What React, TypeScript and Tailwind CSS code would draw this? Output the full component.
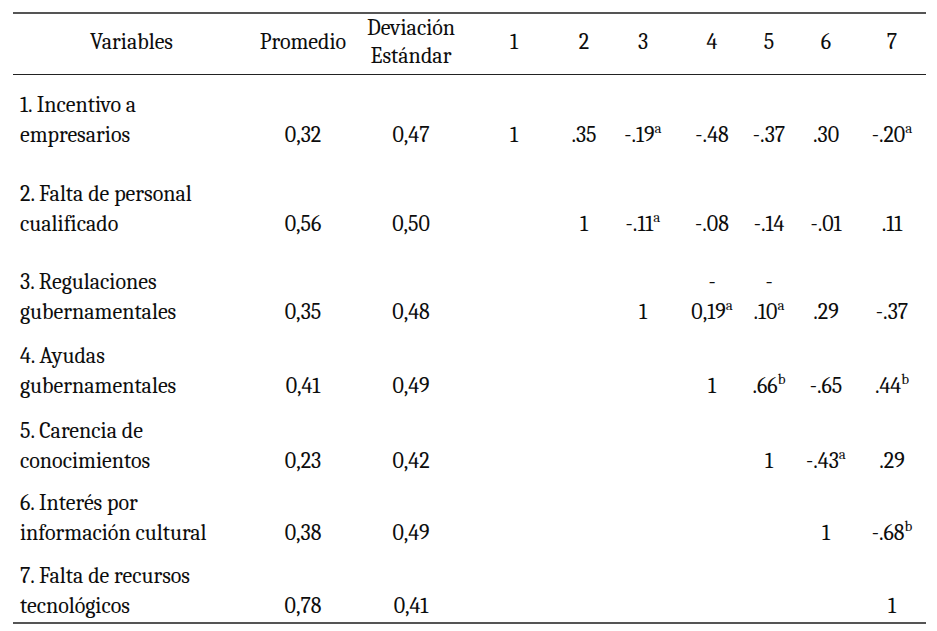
type Cell = { v: string; sup?: string; dash?: boolean };

const rows: { label: [string, string]; mean: string; sd: string; pad: string; cells: Cell[] }[] = [
  {
    label: ['1. Incentivo a', 'empresarios'],
    mean: '0,32',
    sd: '0,47',
    pad: 'pt-[15px]',
    cells: [{ v: '1' }, { v: '.35' }, { v: '-.19', sup: 'a' }, { v: '-.48' }, { v: '-.37' }, { v: '.30' }, { v: '-.20', sup: 'a' }],
  },
  {
    label: ['2. Falta de personal', 'cualificado'],
    mean: '0,56',
    sd: '0,50',
    pad: 'pt-[29px]',
    cells: [{ v: '' }, { v: '1' }, { v: '-.11', sup: 'a' }, { v: '-.08' }, { v: '-.14' }, { v: '-.01' }, { v: '.11' }],
  },
  {
    label: ['3. Regulaciones', 'gubernamentales'],
    mean: '0,35',
    sd: '0,48',
    pad: 'pt-[28px]',
    cells: [{ v: '' }, { v: '' }, { v: '1' }, { v: '0,19', sup: 'a', dash: true }, { v: '.10', sup: 'a', dash: true }, { v: '.29' }, { v: '-.37' }],
  },
  {
    label: ['4. Ayudas', 'gubernamentales'],
    mean: '0,41',
    sd: '0,49',
    pad: 'pt-[14px]',
    cells: [{ v: '' }, { v: '' }, { v: '' }, { v: '1' }, { v: '.66', sup: 'b' }, { v: '-.65' }, { v: '.44', sup: 'b' }],
  },
  {
    label: ['5. Carencia de', 'conocimientos'],
    mean: '0,23',
    sd: '0,42',
    pad: 'pt-[15px]',
    cells: [{ v: '' }, { v: '' }, { v: '' }, { v: '' }, { v: '1' }, { v: '-.43', sup: 'a' }, { v: '.29' }],
  },
  {
    label: ['6. Interés por', 'información cultural'],
    mean: '0,38',
    sd: '0,49',
    pad: 'pt-[12px]',
    cells: [{ v: '' }, { v: '' }, { v: '' }, { v: '' }, { v: '' }, { v: '1' }, { v: '-.68', sup: 'b' }],
  },
  {
    label: ['7. Falta de recursos', 'tecnológicos'],
    mean: '0,78',
    sd: '0,41',
    pad: 'pt-[13px] pb-[1px]',
    cells: [{ v: '' }, { v: '' }, { v: '' }, { v: '' }, { v: '' }, { v: '' }, { v: '1' }],
  },
];

const widths = [237, 106, 110, 96, 44, 74, 64, 50, 64, 68];

export default function App() {
  return (
    <div className="w-[937px] h-[631px] bg-white pl-[13px] pt-[12px] text-[#0d0d0d] text-[22px] font-serif">
      <table className="table-fixed border-collapse w-[913px]">
        <colgroup>
          {widths.map((w, i) => (
            <col key={i} style={{ width: w }} />
          ))}
        </colgroup>
        <thead>
          <tr className="border-t-2 border-t-[#555] border-b border-b-[#222] leading-[28px]">
            <th className="font-normal text-center align-middle pb-[4px]">Variables</th>
            <th className="font-normal text-center align-middle pb-[4px]">Promedio</th>
            <th className="font-normal text-center align-middle pb-[4px]">
              Deviación
              <br />
              Estándar
            </th>
            {[1, 2, 3, 4, 5, 6, 7].map((n) => (
              <th key={n} className="font-normal text-center align-middle pb-[4px]">
                {n}
              </th>
            ))}
          </tr>
        </thead>
        <tbody className="leading-[30px]">
          {rows.map((r, i) => (
            <tr key={i} className={i === rows.length - 1 ? 'border-b-2 border-b-[#555]' : ''}>
              <td className={`text-left pl-[7px] align-bottom whitespace-nowrap ${r.pad}`}>
                {r.label[0]}
                <br />
                {r.label[1]}
              </td>
              <td className={`text-center align-bottom ${r.pad}`}>{r.mean}</td>
              <td className={`text-center align-bottom ${r.pad}`}>{r.sd}</td>
              {r.cells.map((c, j) => (
                <td key={j} className={`text-center align-bottom whitespace-nowrap ${r.pad}`}>
                  {c.dash && (
                    <>
                      -
                      <br />
                    </>
                  )}
                  {c.v}
                  {c.sup && <sup className="text-[15px] -top-[0.6em]">{c.sup}</sup>}
                </td>
              ))}
            </tr>
          ))}
        </tbody>
      </table>
    </div>
  );
}
